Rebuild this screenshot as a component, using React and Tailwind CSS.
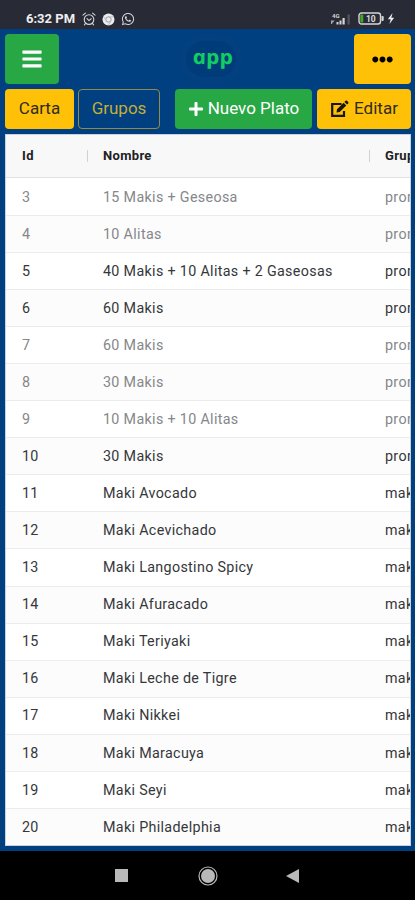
import React from "react";
import { FaBars, FaEllipsisH, FaPlus, FaWhatsapp } from "react-icons/fa";
import { IoIosFlash } from "react-icons/io";

const dishes = [
  { id: 3, name: "15 Makis + Geseosa", group: "promo", off: true },
  { id: 4, name: "10 Alitas", group: "promo", off: true },
  { id: 5, name: "40 Makis + 10 Alitas + 2 Gaseosas", group: "promo" },
  { id: 6, name: "60 Makis", group: "promo" },
  { id: 7, name: "60 Makis", group: "promo", off: true },
  { id: 8, name: "30 Makis", group: "promo", off: true },
  { id: 9, name: "10 Makis + 10 Alitas", group: "promo", off: true },
  { id: 10, name: "30 Makis", group: "promo" },
  { id: 11, name: "Maki Avocado", group: "makis" },
  { id: 12, name: "Maki Acevichado", group: "makis" },
  { id: 13, name: "Maki Langostino Spicy", group: "makis" },
  { id: 14, name: "Maki Afuracado", group: "makis" },
  { id: 15, name: "Maki Teriyaki", group: "makis" },
  { id: 16, name: "Maki Leche de Tigre", group: "makis" },
  { id: 17, name: "Maki Nikkei", group: "makis" },
  { id: 18, name: "Maki Maracuya", group: "makis" },
  { id: 19, name: "Maki Seyi", group: "makis" },
  { id: 20, name: "Maki Philadelphia", group: "makis" },
];

const AlarmIcon = () => (
  <svg className="h-[14px] w-[14px]" viewBox="0 0 14 14" fill="none" stroke="#d5d6da" strokeWidth="1.1" strokeLinecap="round">
    <circle cx="7" cy="7.6" r="4.8" />
    <path d="M1 3.2 3.4 1.2M13 3.2 10.6 1.2M5 6.6 7 8.6 9.2 6.8M3.4 11.6 2.4 12.8M10.6 11.6 11.6 12.8" />
  </svg>
);

const ChromeIcon = () => (
  <svg className="h-[13px] w-[13px]" viewBox="0 0 13 13">
    <circle cx="6.5" cy="6.5" r="6" fill="#ececee" />
    <circle cx="6.5" cy="6.5" r="2.7" fill="none" stroke="#9a9ca3" strokeWidth="1" />
    <path d="M6.5 3.8h5M4.2 7.8 1.9 4M8.8 7.8 6.6 12" stroke="#b4b6bb" strokeWidth="0.8" />
  </svg>
);

const SignalIcon = () => (
  <svg className="h-[14px] w-[22px]" viewBox="0 0 22 14">
    <text x="2" y="5.5" fontSize="6" fontWeight="700" fill="#d5d6da">4G</text>
    <path d="M1 8.5h3.5l-1.5 2h-.8V12H1z" fill="#a5a7ad" />
    <path d="M6.5 10h2v2.5h-2zM9.5 8.5h2v4h-2zM12.5 6h2.2v6.5h-2.2z" fill="#d5d6da" />
    <path d="M17.5 2.5h2.3v10h-2.3z" fill="#52555e" />
  </svg>
);

const BatteryIcon = () => (
  <svg className="h-[13px] w-[27px]" viewBox="0 0 27 13">
    <rect x="1" y="1" width="21.5" height="11" rx="2.5" fill="none" stroke="#d5d6da" strokeWidth="1.4" />
    <path d="M23.5 4h1.2q1 0 1 1v3q0 1-1 1h-1.2z" fill="#d5d6da" />
    <rect x="2.3" y="2.4" width="3" height="8.2" rx="1" fill="#43a624" />
    <text x="12.8" y="9.6" textAnchor="middle" fontSize="8.5" fontWeight="700" fill="#dcdde0">10</text>
  </svg>
);

const EditIcon = () => (
  <svg className="h-[18px] w-[20px]" viewBox="0 0 20 18" fill="#18160f">
    <path d="M11.5 4H2.2v11.8H14V11" fill="none" stroke="#18160f" strokeWidth="2.2" />
    <path d="M6.5 12.5 7 9.3 13.6 2.7 16.3 5.4 9.7 12zM14.4 1.9 15.5.8q.7-.6 1.4 0l1.3 1.3q.6.7 0 1.4L17.1 4.6z" />
  </svg>
);

const StatusBar = () => (
  <div className="flex h-[29px] items-end justify-between bg-[#282b35] pr-[18px] pb-[3px] pl-[26px] text-[#eeeef0]">
    <div className="flex items-center gap-[6px]">
      <span className="w-[50px] text-[13px] leading-[14px] font-bold whitespace-nowrap">6:32 PM</span>
      <AlarmIcon />
      <ChromeIcon />
      <FaWhatsapp className="h-[14px] w-[14px] text-[#d5d6da]" />
    </div>
    <div className="flex items-center">
      <SignalIcon />
      <div className="ml-[6px] flex items-center">
        <BatteryIcon />
        <IoIosFlash className="h-[15px] w-[12px]" />
      </div>
    </div>
  </div>
);

const Header = () => (
  <div className="flex h-[50px] items-center justify-between">
    <button className="flex h-[50px] w-[54px] items-center justify-center rounded-[4px] bg-[#28a745] text-white">
      <FaBars className="h-[22px] w-[22px]" />
    </button>
    <div className="ml-[9px] flex h-[50px] w-[64px] items-center justify-center rounded-full border-[7px] border-[#05468a]/40 bg-[#003c79]">
      <span className="inline-block scale-x-[1.14] skew-x-[11deg] pb-[5px] pl-[3px] text-[20px] leading-none font-bold text-[#13cd62] italic [font-family:'Open_Sans',sans-serif]">
        app
      </span>
    </div>
    <button className="flex h-[50px] w-[57px] items-center justify-center rounded-[4px] bg-[#ffc107]">
      <FaEllipsisH className="h-[21px] w-[21px] text-black" />
    </button>
  </div>
);

const Toolbar = () => (
  <div className="mt-[5px] flex h-[40px] justify-between text-[17px]">
    <div className="flex gap-[4px]">
      <button className="w-[69px] rounded-[4px] bg-[#ffc107] text-[#302b20]">Carta</button>
      <button className="w-[82px] rounded-[4px] border border-[#968b45] text-[#c7ad35]">Grupos</button>
    </div>
    <div className="flex gap-[5px]">
      <button className="flex w-[137px] items-center justify-center gap-[4px] rounded-[4px] bg-[#28a745] whitespace-nowrap text-white">
        <FaPlus className="h-[16px] w-[16px]" />
        Nuevo Plato
      </button>
      <button className="flex w-[94px] items-center justify-center gap-[4px] rounded-[4px] bg-[#ffc107] text-[#302b20]">
        <EditIcon />
        Editar
      </button>
    </div>
  </div>
);

const DishTable = () => (
  <div className="mt-[5px] h-[712px] overflow-hidden border border-[#c9d3de] bg-white text-[14.3px] tracking-[0.33px] whitespace-nowrap">
    <div className="flex h-[43px] items-center border-b border-[#dfe1e2] bg-[#f8f8f8] text-[13px] font-bold text-[#202224]">
      <div className="flex w-[82px] shrink-0 items-center justify-between pl-4">
        Id
        <span className="h-[12px] w-px bg-[#d0d2d3]" />
      </div>
      <div className="flex w-[282px] shrink-0 items-center justify-between pl-[15px]">
        Nombre
        <span className="h-[12px] w-px bg-[#d0d2d3]" />
      </div>
      <div className="pl-[15px]">Grupo</div>
    </div>
    <div className="pt-px">
      {dishes.map((dish, i) => (
        <div
          key={dish.id}
          className={`flex h-[37.05px] items-center border-b border-[#ececed] pt-px ${i % 2 ? "bg-[#fcfcfc]" : "bg-white"} ${
            dish.off ? "text-[#85878a]" : "text-[#35373a]"
          }`}
        >
          <div className="w-[97px] shrink-0 pl-4">{dish.id}</div>
          <div className="w-[282px] shrink-0">{dish.name}</div>
          <div>{dish.group}</div>
        </div>
      ))}
    </div>
  </div>
);

const NavBar = () => (
  <div className="flex h-[49px] items-center bg-black pl-[115px]">
    <div className="h-[13px] w-[13px] bg-[#b9b9b9]" />
    <svg className="ml-[70px] h-[20px] w-[20px]" viewBox="0 0 20 20">
      <circle cx="10" cy="10" r="9" fill="none" stroke="#b9b9b9" strokeWidth="1.2" />
      <circle cx="10" cy="10" r="7" fill="#b9b9b9" />
    </svg>
    <svg className="ml-[68px] h-[14px] w-[13px]" viewBox="0 0 13 14">
      <path d="M13 0v14L0 7z" fill="#b9b9b9" />
    </svg>
  </div>
);

const App = () => {
  return (
    <div className="flex h-[900px] w-[415px] flex-col overflow-hidden [font-family:Roboto,sans-serif]">
      <StatusBar />
      <main className="h-[822px] bg-[#003f80] pt-[5px] pr-[4px] pl-[5px]">
        <Header />
        <Toolbar />
        <DishTable />
      </main>
      <NavBar />
    </div>
  );
};

export default App;
